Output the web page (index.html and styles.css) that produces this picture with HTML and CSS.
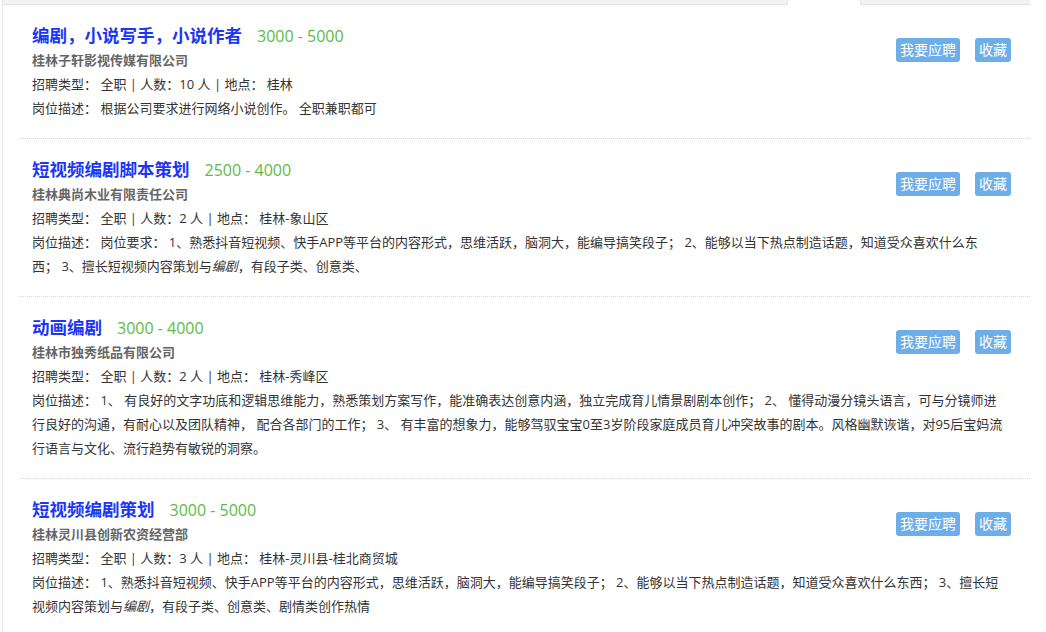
FILE: index.html
```html
<!DOCTYPE html>
<html>
<head>
  <meta charset="utf-8">
  <title>职位列表</title>
  <link rel="stylesheet" href="styles.css">
</head>
<body>
  <div class="panel">
    <div class="tabs">
      <span class="tab-active"></span>
    </div>

    <ul class="job-list">
      <li class="job">
        <div class="job-info">
          <h3><a class="job-title">编剧，小说写手，小说作者</a><span class="salary">3000 - 5000</span></h3>
          <p class="company">桂林子轩影视传媒有限公司</p>
          <p>招聘类型： 全职 | 人数：10 人 | 地点： 桂林</p>
          <p>岗位描述： 根据公司要求进行网络小说创作。 全职兼职都可</p>
        </div>
        <div class="job-actions">
          <button>我要应聘</button>
          <button>收藏</button>
        </div>
      </li>

      <li class="job">
        <div class="job-info">
          <h3><a class="job-title">短视频编剧脚本策划</a><span class="salary">2500 - 4000</span></h3>
          <p class="company">桂林典尚木业有限责任公司</p>
          <p>招聘类型： 全职 | 人数：2 人 | 地点： 桂林-象山区</p>
          <p>岗位描述： 岗位要求： 1、熟悉抖音短视频、快手APP等平台的内容形式，思维活跃，脑洞大，能编导搞笑段子； 2、能够以当下热点制造话题，知道受众喜欢什么东西； 3、擅长短视频内容策划与<em>编剧</em>，有段子类、创意类、</p>
        </div>
        <div class="job-actions">
          <button>我要应聘</button>
          <button>收藏</button>
        </div>
      </li>

      <li class="job">
        <div class="job-info">
          <h3><a class="job-title">动画编剧</a><span class="salary">3000 - 4000</span></h3>
          <p class="company">桂林市独秀纸品有限公司</p>
          <p>招聘类型： 全职 | 人数：2 人 | 地点： 桂林-秀峰区</p>
          <p>岗位描述： 1、 有良好的文字功底和逻辑思维能力，熟悉策划方案写作，能准确表达创意内涵，独立完成育儿情景剧剧本创作； 2、 懂得动漫分镜头语言，可与分镜师进行良好的沟通，有耐心以及团队精神， 配合各部门的工作； 3、 有丰富的想象力，能够驾驭宝宝0至3岁阶段家庭成员育儿冲突故事的剧本。风格幽默诙谐，对95后宝妈流行语言与文化、流行趋势有敏锐的洞察。</p>
        </div>
        <div class="job-actions">
          <button>我要应聘</button>
          <button>收藏</button>
        </div>
      </li>

      <li class="job">
        <div class="job-info">
          <h3><a class="job-title">短视频编剧策划</a><span class="salary">3000 - 5000</span></h3>
          <p class="company">桂林灵川县创新农资经营部</p>
          <p>招聘类型： 全职 | 人数：3 人 | 地点： 桂林-灵川县-桂北商贸城</p>
          <p>岗位描述： 1、熟悉抖音短视频、快手APP等平台的内容形式，思维活跃，脑洞大，能编导搞笑段子； 2、能够以当下热点制造话题，知道受众喜欢什么东西； 3、擅长短视频内容策划与<em>编剧</em>，有段子类、创意类、剧情类创作热情</p>
        </div>
        <div class="job-actions">
          <button>我要应聘</button>
          <button>收藏</button>
        </div>
      </li>
    </ul>
  </div>
</body>
</html>
```

FILE: styles.css
```css
body {
  margin: 0;
  font-family: "Open Sans", "Noto Sans CJK SC", sans-serif;
  font-size: 13px;
  color: #333;
  background: #fff;
}

.panel {
  width: 1027px;
  margin-left: 2px;
  border-left: 1px solid #e6e6e6;
}

.tabs {
  height: 4px;
  background: #f2f2f2;
  border-bottom: 1px solid #e2e2e2;
  position: relative;
}

.tab-active {
  position: absolute;
  left: 784px;
  top: 0;
  width: 72px;
  height: 5px;
  background: #fff;
  border-left: 1px solid #e2e2e2;
  border-right: 1px solid #e2e2e2;
}

.job-list {
  list-style: none;
  margin: 0;
  padding: 0 0 0 17px;
}

.job {
  display: flex;
  justify-content: space-between;
  padding: 18px 19px 18px 12px;
  border-bottom: 1px dotted #d8d8d8;
}

.job-info {
  flex: 1;
  max-width: 971px;
}

.job-info h3 {
  margin: 0;
  line-height: 24px;
  font-size: 17.5px;
}

.job-title {
  color: #1d36f5;
  font-weight: bold;
}

.salary {
  margin-left: 15px;
  font-size: 16px;
  font-weight: normal;
  color: #5cbb45;
}

.job-info p {
  margin: 0;
  line-height: 24px;
}

.job-info .company {
  font-weight: bold;
  color: #666;
}

.job-info em {
  font-style: italic;
}

.job-actions {
  display: flex;
  gap: 15px;
  align-self: flex-start;
  margin-top: 15px;
  margin-left: -120px;
}

.job-actions button {
  height: 24px;
  padding: 0 4px;
  border: none;
  border-radius: 3px;
  background: #6daee8;
  color: #fff;
  font-family: inherit;
  font-size: 14px;
  line-height: 24px;
  cursor: pointer;
}
```
